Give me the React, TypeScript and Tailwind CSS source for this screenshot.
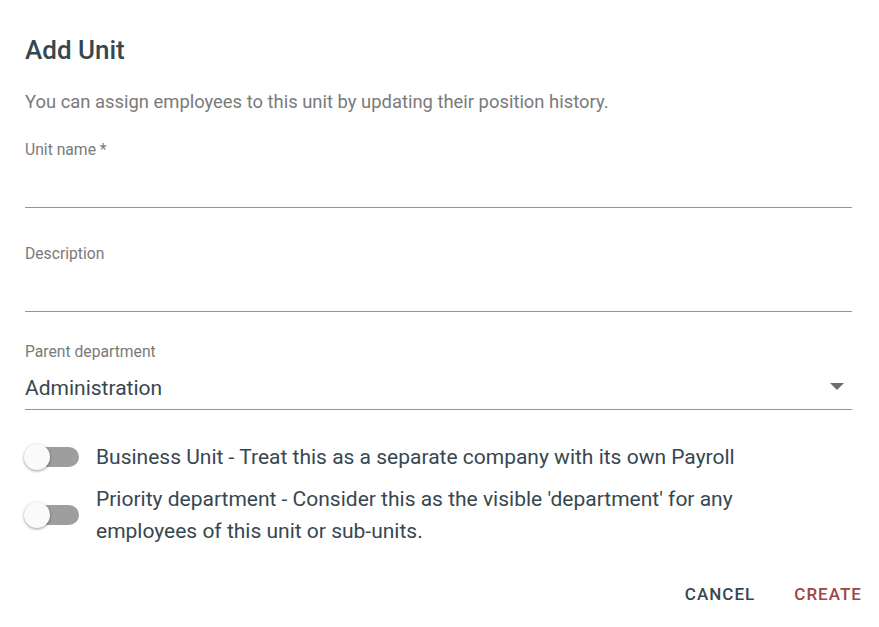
function Toggle() {
  return (
    <div className="relative w-[54px] h-[20px] shrink-0">
      <div className="absolute left-[10px] right-0 top-0 h-[20px] rounded-full bg-[#9e9e9e]" />
      <div className="absolute left-[-1px] top-[-3px] w-[26px] h-[26px] rounded-full bg-[#fafafa] shadow-[0_1px_3px_rgba(0,0,0,0.4)]" />
    </div>
  );
}

function Field({ label, value }: { label: string; value?: string }) {
  return (
    <div className="flex flex-col">
      <label className="text-[15.7px] leading-[20px] text-[#7a7a7a]">{label}</label>
      <div className="h-[48px] flex items-center justify-between border-b border-[#949494]">
        <span className="text-[21px] leading-[28px] text-[#37474f] pt-[4px]">{value}</span>
        {value && (
          <svg width="14" height="8" viewBox="0 0 14 8" className="mr-[8px] mt-[2px]">
            <path d="M0 0h14L7 7z" fill="#6e6e6e" />
          </svg>
        )}
      </div>
    </div>
  );
}

export default function App() {
  return (
    <div className="w-[879px] h-[627px] bg-white font-['Roboto',sans-serif] pl-[25px] pr-[27px] pt-[34px] text-[#37474f]">
      <h1 className="text-[26px] leading-[32px] font-medium">Add Unit</h1>
      <p className="mt-[24px] text-[18.4px] leading-[24px] text-[#7a7a7a]">
        You can assign employees to this unit by updating their position history.
      </p>
      <div className="mt-[26px] flex flex-col gap-[36px]">
        <Field label="Unit name *" />
        <Field label="Description" />
      </div>
      <div className="mt-[30px]">
        <Field label="Parent department" value="Administration" />
      </div>
      <div className="mt-[31px] flex items-center gap-[17px]">
        <Toggle />
        <span className="text-[21px] leading-[32px]">Business Unit - Treat this as a separate company with its own Payroll</span>
      </div>
      <div className="mt-[10px] flex items-center gap-[17px]">
        <Toggle />
        <span className="text-[21px] leading-[32px] w-[680px]">
          Priority department - Consider this as the visible 'department' for any employees of this unit or sub-units.
        </span>
      </div>
      <div className="mt-[37px] flex justify-end gap-[39px] -mr-[10px]">
        <button className="text-[17px] leading-[20px] font-medium tracking-[0.06em] text-[#37474f]">CANCEL</button>
        <button className="text-[17px] leading-[20px] font-medium tracking-[0.06em] text-[#a04545]">CREATE</button>
      </div>
    </div>
  );
}
